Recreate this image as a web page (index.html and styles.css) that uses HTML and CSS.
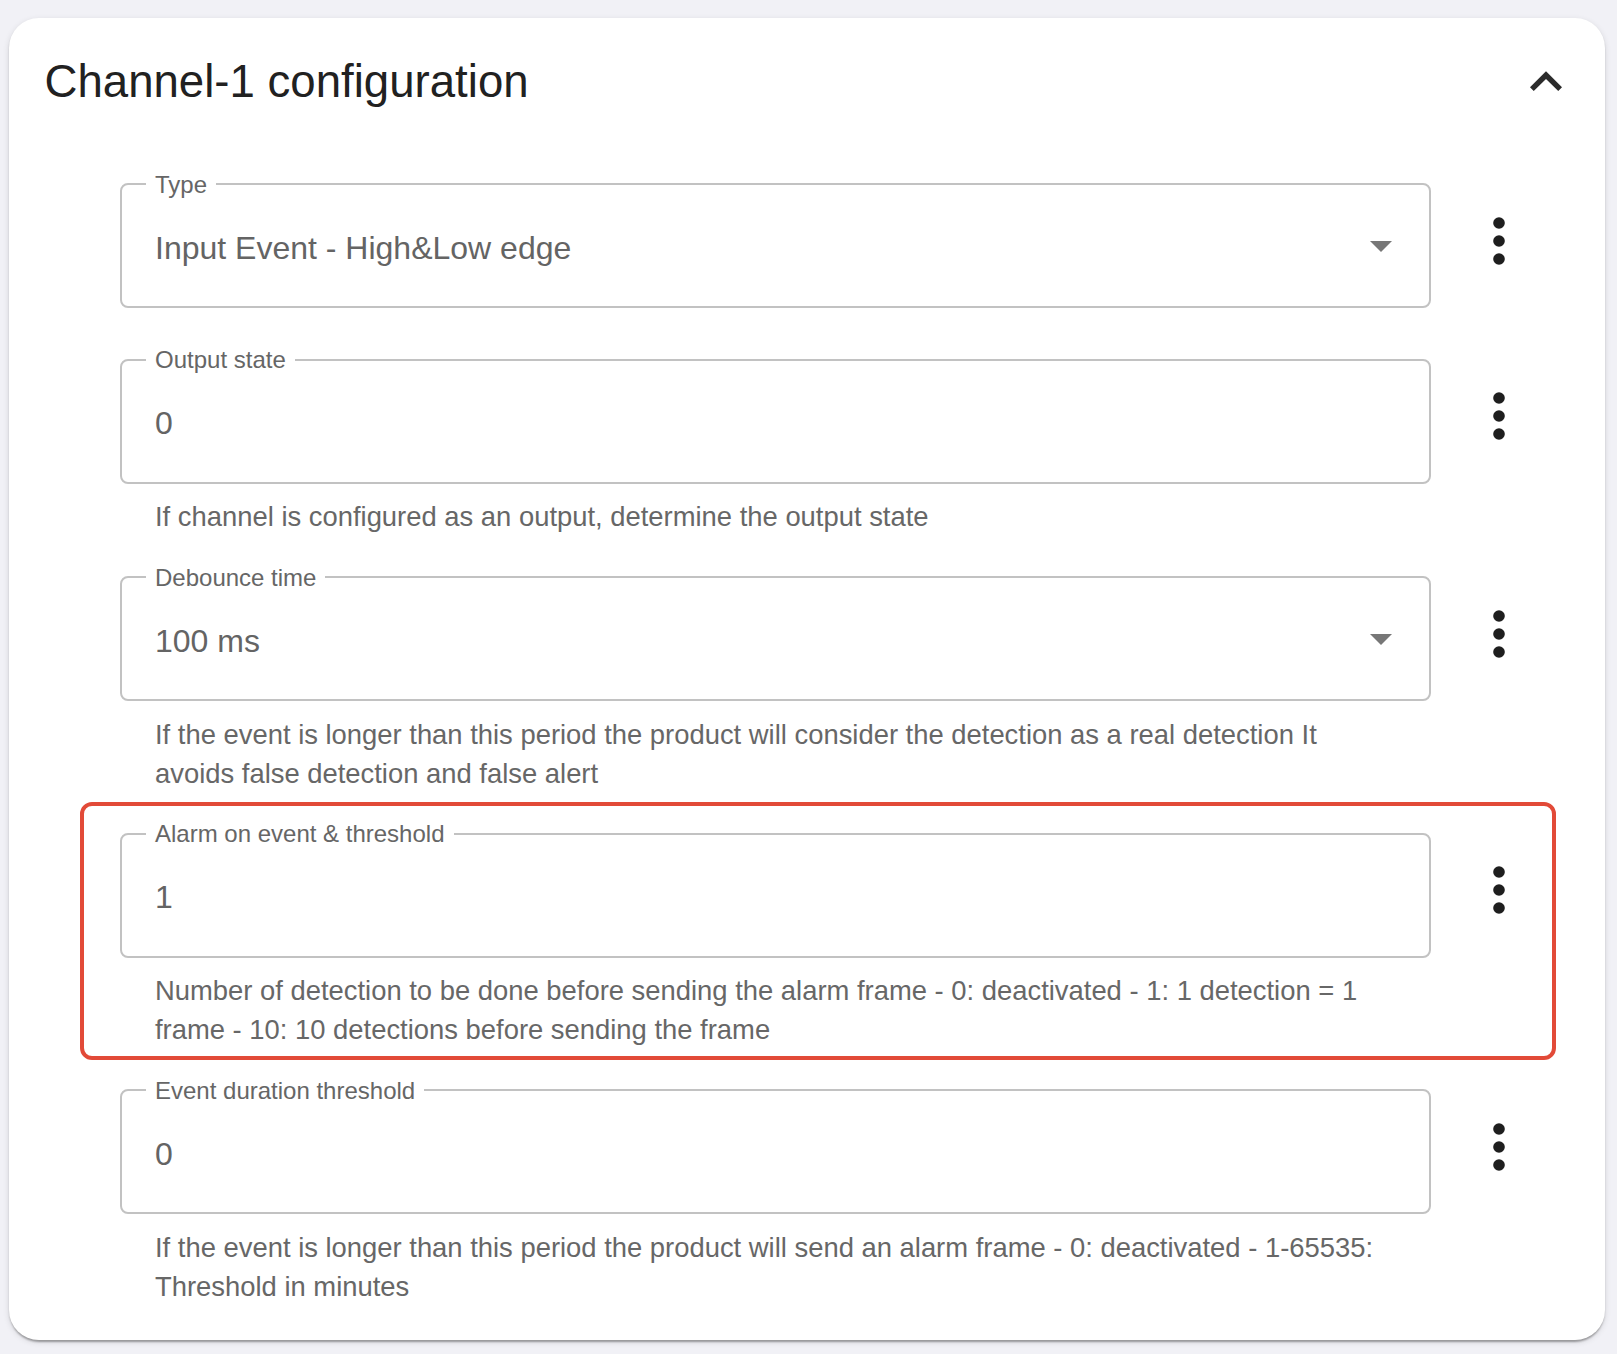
FILE: index.html
```html
<!DOCTYPE html>
<html lang="en">
<head>
<meta charset="utf-8">
<title>Channel-1 configuration</title>
<link rel="stylesheet" href="styles.css">
</head>
<body>
<section class="card">
  <header class="card-header">
    <h2 class="title">Channel-1 configuration</h2>
    <button class="collapse" aria-label="Collapse">
      <svg viewBox="0 0 24 24" width="64" height="64"><path d="M12 8l-6 6 1.41 1.41L12 10.83l4.59 4.58L18 14z"/></svg>
    </button>
  </header>

  <div class="fields">
    <div class="item">
      <div class="row">
        <div class="field">
          <span class="label">Type</span>
          <span class="value">Input Event - High&amp;Low edge</span>
          <svg class="arrow" width="22" height="11" viewBox="0 0 22 11"><polygon points="0,0 22,0 11,11"/></svg>
        </div>
        <svg class="kebab" width="12" height="48" viewBox="0 0 12 48"><circle cx="6" cy="6" r="5.8"/><circle cx="6" cy="24" r="5.8"/><circle cx="6" cy="42" r="5.8"/></svg>
      </div>
    </div>

    <div class="item with-help">
      <div class="row">
        <div class="field">
          <span class="label">Output state</span>
          <span class="value">0</span>
        </div>
        <svg class="kebab" width="12" height="48" viewBox="0 0 12 48"><circle cx="6" cy="6" r="5.8"/><circle cx="6" cy="24" r="5.8"/><circle cx="6" cy="42" r="5.8"/></svg>
      </div>
      <p class="helper">If channel is configured as an output, determine the output state</p>
    </div>

    <div class="item with-help">
      <div class="row">
        <div class="field">
          <span class="label">Debounce time</span>
          <span class="value">100 ms</span>
          <svg class="arrow" width="22" height="11" viewBox="0 0 22 11"><polygon points="0,0 22,0 11,11"/></svg>
        </div>
        <svg class="kebab" width="12" height="48" viewBox="0 0 12 48"><circle cx="6" cy="6" r="5.8"/><circle cx="6" cy="24" r="5.8"/><circle cx="6" cy="42" r="5.8"/></svg>
      </div>
      <p class="helper">If the event is longer than this period the product will consider the detection as a real detection It<br>avoids false detection and false alert</p>
    </div>

    <div class="item with-help highlight">
      <div class="row">
        <div class="field">
          <span class="label">Alarm on event &amp; threshold</span>
          <span class="value">1</span>
        </div>
        <svg class="kebab" width="12" height="48" viewBox="0 0 12 48"><circle cx="6" cy="6" r="5.8"/><circle cx="6" cy="24" r="5.8"/><circle cx="6" cy="42" r="5.8"/></svg>
      </div>
      <p class="helper">Number of detection to be done before sending the alarm frame - 0: deactivated - 1: 1 detection = 1<br>frame - 10: 10 detections before sending the frame</p>
    </div>

    <div class="item with-help">
      <div class="row">
        <div class="field">
          <span class="label">Event duration threshold</span>
          <span class="value">0</span>
        </div>
        <svg class="kebab" width="12" height="48" viewBox="0 0 12 48"><circle cx="6" cy="6" r="5.8"/><circle cx="6" cy="24" r="5.8"/><circle cx="6" cy="42" r="5.8"/></svg>
      </div>
      <p class="helper">If the event is longer than this period the product will send an alarm frame - 0: deactivated - 1-65535:<br>Threshold in minutes</p>
    </div>
  </div>
</section>
</body>
</html>
```

FILE: styles.css
```css
* {
  box-sizing: border-box;
}

html,
body {
  margin: 0;
}

body {
  background: #f1f1f6;
  padding: 18px 12px 14px 9px;
  font-family: "Liberation Sans", Arial, sans-serif;
}

.card {
  background: #fff;
  border-radius: 30px;
  padding: 31.9px 27px 34px 35.5px;
  box-shadow: 0 4px 2px -2px rgba(0, 0, 0, 0.2), 0 2px 2px rgba(0, 0, 0, 0.14), 0 2px 6px rgba(0, 0, 0, 0.12);
}

.card-header {
  display: flex;
  align-items: center;
  justify-content: space-between;
  height: 64px;
}

.title {
  margin: 0;
  font-size: 45.6px;
  line-height: 54px;
  font-weight: 400;
  color: #212121;
}

.collapse {
  width: 64px;
  height: 64px;
  padding: 0;
  border: 0;
  background: none;
  color: #2b2b2b;
}

.collapse svg {
  display: block;
  fill: currentColor;
}

.fields {
  margin: 69.6px 0 0 75px;
}

.item + .item {
  margin-top: 50.5px;
}

.item.with-help + .item {
  margin-top: 40px;
}

.row {
  display: flex;
  align-items: flex-start;
}

.field {
  position: relative;
  flex-shrink: 0;
  width: 1311.5px;
  height: 125px;
  border: 2px solid #c2c2c2;
  border-radius: 8px;
  display: flex;
  align-items: center;
  padding: 4px 0 0 33.5px;
}

.label {
  position: absolute;
  left: 24.5px;
  top: -12.9px;
  padding: 0 9px;
  background: #fff;
  font-size: 24px;
  line-height: 24px;
  color: #666;
  white-space: nowrap;
}

.value {
  flex: 1;
  font-size: 32px;
  line-height: 38px;
  color: #646464;
}

.arrow {
  flex-shrink: 0;
  margin: 0 37px 3px 0;
  fill: #777;
}

.kebab {
  flex-shrink: 0;
  margin: 33.5px 0 0 62.3px;
  fill: #1e1e1e;
}

.helper {
  margin: 13.5px 0 0;
  padding-left: 35.5px;
  font-size: 27.4px;
  line-height: 39px;
  color: #676767;
}

.highlight {
  position: relative;
}

.highlight::after {
  content: "";
  position: absolute;
  top: -30.5px;
  bottom: -11px;
  left: -40px;
  right: 22px;
  border: 4px solid #e24a38;
  border-radius: 12px;
  pointer-events: none;
}
```
